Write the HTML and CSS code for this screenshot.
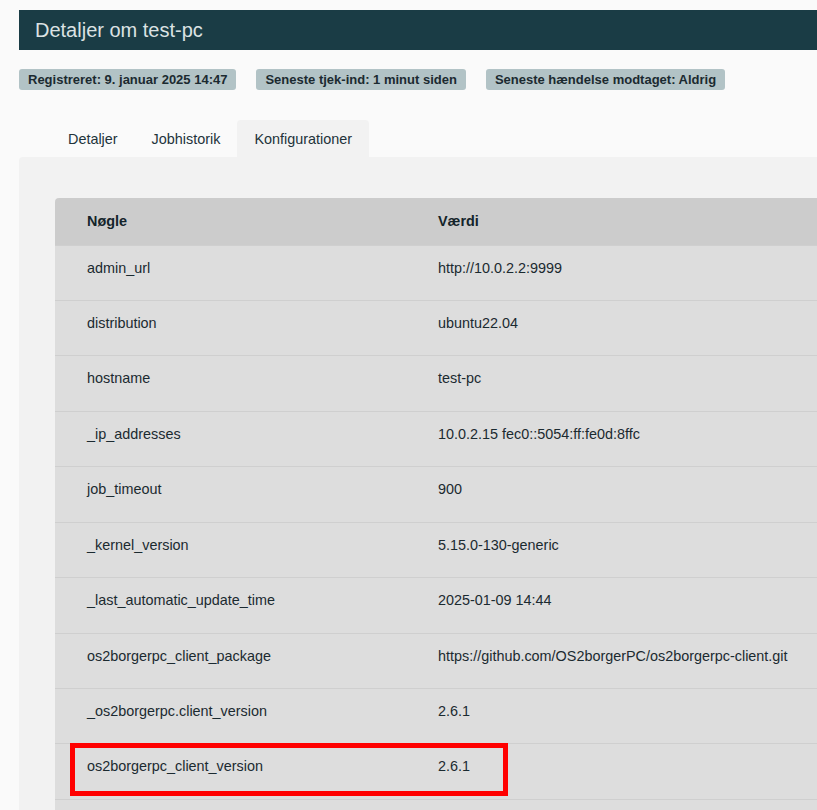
FILE: index.html
```html
<!DOCTYPE html>
<html lang="da">
<head>
<meta charset="utf-8">
<title>Detaljer om test-pc</title>
<link rel="stylesheet" href="styles.css">
</head>
<body>
<div class="page">
  <h1 class="title">Detaljer om test-pc</h1>
  <div class="badges">
    <span class="badge">Registreret: 9. januar 2025 14:47</span>
    <span class="badge">Seneste tjek-ind: 1 minut siden</span>
    <span class="badge">Seneste hændelse modtaget: Aldrig</span>
  </div>
  <nav class="tabs">
    <span class="tab">Detaljer</span>
    <span class="tab">Jobhistorik</span>
    <span class="tab active">Konfigurationer</span>
  </nav>
  <div class="panel">
    <div class="table-wrap">
      <table class="config">
        <thead>
          <tr><th class="key">Nøgle</th><th>Værdi</th></tr>
        </thead>
        <tbody>
          <tr><td class="key">admin_url</td><td>http://10.0.2.2:9999</td></tr>
          <tr><td class="key">distribution</td><td>ubuntu22.04</td></tr>
          <tr><td class="key">hostname</td><td>test-pc</td></tr>
          <tr><td class="key">_ip_addresses</td><td>10.0.2.15 fec0::5054:ff:fe0d:8ffc</td></tr>
          <tr><td class="key">job_timeout</td><td>900</td></tr>
          <tr><td class="key">_kernel_version</td><td>5.15.0-130-generic</td></tr>
          <tr><td class="key">_last_automatic_update_time</td><td>2025-01-09 14:44</td></tr>
          <tr><td class="key">os2borgerpc_client_package</td><td>https://github.com/OS2borgerPC/os2borgerpc-client.git</td></tr>
          <tr><td class="key">_os2borgerpc.client_version</td><td>2.6.1</td></tr>
          <tr><td class="key">os2borgerpc_client_version</td><td>2.6.1</td></tr>
          <tr><td class="key">&nbsp;</td><td>&nbsp;</td></tr>
        </tbody>
      </table>
      <div class="highlight"></div>
    </div>
  </div>
</div>
</body>
</html>
```

FILE: styles.css
```css
html, body {
  margin: 0;
  padding: 0;
  overflow: hidden;
  background: #fafafa;
}

body {
  font-family: "Liberation Sans", Arial, sans-serif;
  color: #1b2a30;
}

.page {
  padding: 10px 0 0 19px;
  width: 1100px;
}

.title {
  margin: 0;
  height: 40px;
  box-sizing: border-box;
  padding: 0 16px;
  background: #1a3c45;
  color: #dce2e3;
  font-size: 20px;
  font-weight: normal;
  line-height: 41px;
}

.badges {
  display: flex;
  gap: 20px;
  margin-top: 19px;
}

.badge {
  background: #b2c3c6;
  border-radius: 3px;
  font-size: 13px;
  font-weight: bold;
  height: 21px;
  line-height: 22px;
  padding: 0 9px;
  color: #1b2a30;
}

.tabs {
  display: flex;
  margin-top: 30px;
  padding-left: 32px;
}

.tab {
  padding: 0 17px;
  height: 37px;
  line-height: 39px;
  font-size: 14.4px;
  color: #22333a;
  border-radius: 4px 4px 0 0;
}

.tab.active {
  background: #f2f2f2;
}

.panel {
  background: #f2f2f2;
  border-radius: 4px 0 0 0;
  padding: 41px 0 0 36px;
  height: 700px;
}

.table-wrap {
  position: relative;
}

.config {
  width: 1000px;
  border-collapse: collapse;
  font-size: 14.4px;
}

.config th {
  background: #cccccc;
  text-align: left;
  font-weight: bold;
  height: 47px;
  padding: 0 0 1px 32px;
  color: #14242a;
  box-sizing: border-box;
}

.config thead tr th:first-child {
  border-top-left-radius: 4px;
}

.config td {
  background: #dddddd;
  height: 55.45px;
  padding: 14px 0 0 32px;
  line-height: 17px;
  vertical-align: top;
  border-top: 1px solid #cfcfcf;
  box-sizing: border-box;
}

.config .key {
  width: 351px;
  box-sizing: border-box;
}

.highlight {
  position: absolute;
  left: 15px;
  top: 545px;
  width: 438px;
  height: 53px;
  border: 5px solid #ff0000;
  box-sizing: border-box;
}
```
